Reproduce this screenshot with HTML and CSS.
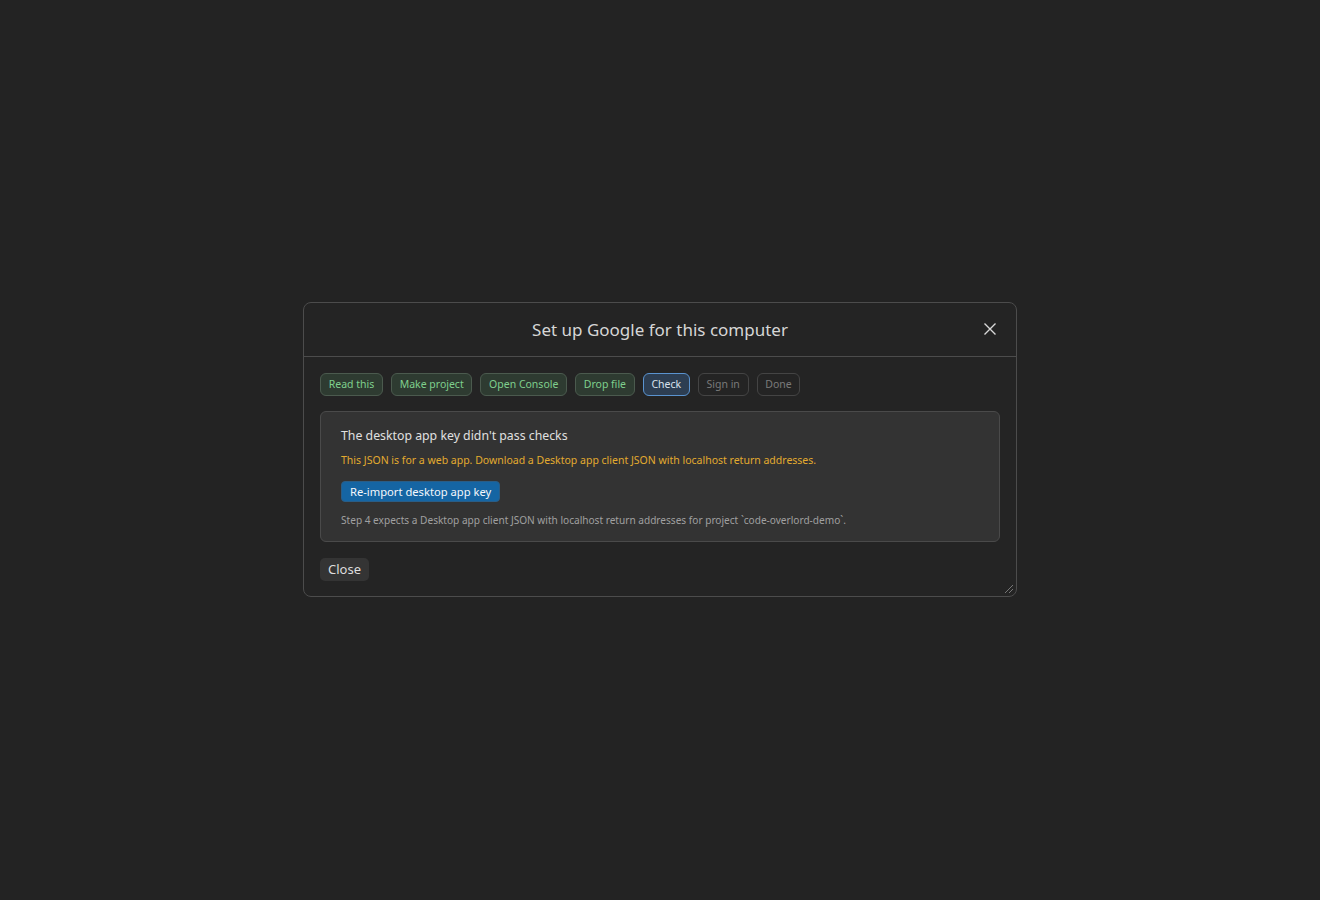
FILE: index.html
```html
<!DOCTYPE html>
<html lang="en">
<head>
  <meta charset="UTF-8" />
  <title>Set up Google</title>
  <link rel="stylesheet" href="styles.css">
</head>
<body>
  <div class="dialog">
    <div class="dialog-header">
      <h2>Set up Google for this computer</h2>
      <button class="close-x" title="Close">
        <svg width="14" height="14" viewBox="0 0 14 14"><path d="M1.5 1.5 L12.5 12.5 M12.5 1.5 L1.5 12.5" stroke="#d8d8d8" stroke-width="1.4" fill="none"/></svg>
      </button>
    </div>

    <div class="dialog-body">
      <div class="steps">
        <span class="step done">Read this</span>
        <span class="step done">Make project</span>
        <span class="step done">Open Console</span>
        <span class="step done">Drop file</span>
        <span class="step current">Check</span>
        <span class="step">Sign in</span>
        <span class="step">Done</span>
      </div>

      <div class="card">
        <div class="card-title">The desktop app key didn't pass checks</div>
        <div class="card-warning">This JSON is for a web app. Download a Desktop app client JSON with localhost return addresses.</div>
        <button class="primary-button">Re-import desktop app key</button>
        <div class="card-note">Step 4 expects a Desktop app client JSON with localhost return addresses for project `code-overlord-demo`.</div>
      </div>

      <button class="close-button">Close</button>
    </div>

    <svg class="grip" width="12" height="12" viewBox="0 0 12 12"><path d="M11 3 L3 11 M11 7 L7 11" stroke="#777" stroke-width="1" fill="none"/></svg>
  </div>
</body>
</html>
```

FILE: styles.css
```css
body {
  margin: 0;
  padding: 0;
  height: 100vh;
  background: #232323;
  font-family: 'Noto Sans', 'Open Sans', sans-serif;
  color: #dcdcdc;
  display: flex;
  align-items: center;
  justify-content: center;
}

.dialog {
  position: relative;
  width: 712px;
  background: #242424;
  border: 1px solid #4c4c4c;
  border-radius: 8px;
  margin-top: -2px;
}

.dialog-header {
  height: 53px;
  border-bottom: 1px solid #4c4c4c;
  display: flex;
  align-items: center;
  justify-content: center;
  position: relative;
}

.dialog-header h2 {
  margin: 0;
  font-size: 17px;
  font-weight: 400;
  color: #d6d6d6;
}

.close-x {
  position: absolute;
  right: 19px;
  top: 19px;
  background: none;
  border: none;
  padding: 0;
  width: 14px;
  height: 14px;
  display: flex;
  cursor: pointer;
}

.dialog-body {
  padding: 16px 16px 15px 16px;
}

.steps {
  display: flex;
  gap: 8px;
  margin-bottom: 15px;
}

.step {
  height: 21px;
  line-height: 21px;
  padding: 0 7.7px;
  font-size: 10.5px;
  border: 1px solid #444;
  border-radius: 6px;
  color: #7a7a7a;
}

.step.done {
  background: #2e3b31;
  border-color: #4b5a4e;
  color: #7fcf8d;
}

.step.current {
  background: #2d3e52;
  border-color: #5a93cf;
  color: #d9e2ec;
}

.card {
  background: #333333;
  border: 1px solid #4a4a4a;
  border-radius: 6px;
  padding: 15px 20px 14px 20px;
  margin-bottom: 16px;
}

.card-title {
  font-size: 12.3px;
  line-height: 18px;
  color: #e0e0e0;
  margin-bottom: 8px;
}

.card-warning {
  font-size: 10.5px;
  line-height: 15px;
  color: #e3ab2f;
  margin-bottom: 13px;
}

.primary-button {
  display: block;
  height: 21px;
  padding: 0 8px;
  font-family: inherit;
  font-size: 11.2px;
  color: #f4f8fc;
  background: #1565a3;
  border: 1px solid #2a5d86;
  border-radius: 4px;
  margin-bottom: 11px;
}

.card-note {
  font-size: 10.1px;
  line-height: 14px;
  color: #a0a0a0;
}

.close-button {
  display: block;
  height: 23px;
  padding: 0 8px;
  font-family: inherit;
  font-size: 13px;
  color: #dddddd;
  background: #343434;
  border: none;
  border-radius: 5px;
}

.grip {
  position: absolute;
  right: 2px;
  bottom: 2px;
}
```
